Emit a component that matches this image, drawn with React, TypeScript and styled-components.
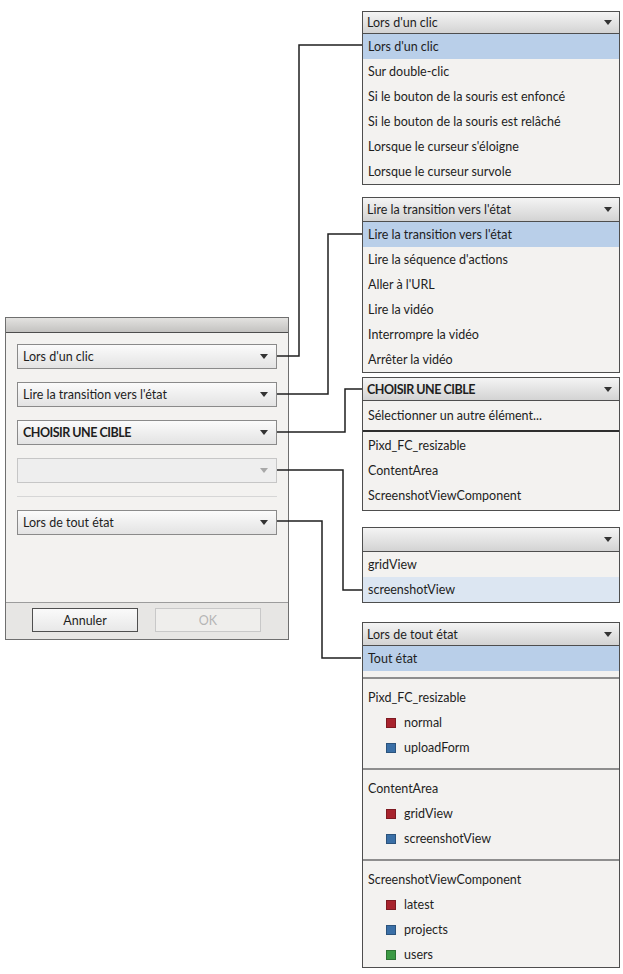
import styled, { createGlobalStyle } from "styled-components";

const GlobalStyle = createGlobalStyle`
  html, body {
    margin: 0;
    padding: 0;
    background: #ffffff;
  }
  body {
    font-family: Lato, "Open Sans", sans-serif;
    font-size: 12.5px;
    color: #1e1e1e;
  }
`;

const Canvas = styled.div`
  position: relative;
  width: 623px;
  height: 974px;
  display: flex;
  align-items: flex-start;
  overflow: hidden;
`;

/* ---------- dialog ---------- */

const Dialog = styled.div`
  box-sizing: border-box;
  margin: 317px 0 0 5px;
  width: 284px;
  height: 323px;
  border: 1px solid #6f6f6f;
  background: #f3f2f0;
  display: flex;
  flex-direction: column;
`;

const TitleBar = styled.div`
  height: 14px;
  background: linear-gradient(#e3e2e0, #c3c2c0);
  border-bottom: 1px solid #4d4d4d;
`;

const DialogBody = styled.div`
  flex: 1;
  padding: 11px 11px 0;
  display: flex;
  flex-direction: column;
  gap: 13px;
`;

const Select = styled.div<{ $disabled?: boolean; $bold?: boolean }>`
  box-sizing: border-box;
  height: 25px;
  display: flex;
  align-items: center;
  justify-content: space-between;
  padding: 0 8px 0 5px;
  border: 1px solid ${(p) => (p.$disabled ? "#c6c6c6" : "#8a8a8a")};
  background: ${(p) =>
    p.$disabled ? "#eeeeee" : "linear-gradient(#fbfbfb, #e3e3e3)"};
  font-weight: ${(p) => (p.$bold ? 700 : 400)};
  letter-spacing: ${(p) => (p.$bold ? "-0.5px" : "0")};
`;

const Arrow = styled.span<{ $disabled?: boolean }>`
  width: 0;
  height: 0;
  border-left: 4px solid transparent;
  border-right: 4px solid transparent;
  border-top: 5px solid ${(p) => (p.$disabled ? "#a8a8a8" : "#333333")};
`;

const Divider = styled.div`
  height: 1px;
  background: #d6d6d6;
`;

const Footer = styled.div`
  height: 37px;
  box-sizing: border-box;
  border-top: 1px solid #9c9c9c;
  background: #e7e6e4;
  display: flex;
  gap: 17px;
  padding: 5px 0 0 26px;
`;

const Button = styled.div<{ $disabled?: boolean }>`
  box-sizing: border-box;
  width: 106px;
  height: 24px;
  display: flex;
  align-items: center;
  justify-content: center;
  border: 1px solid ${(p) => (p.$disabled ? "#c8c8c8" : "#4f4f4f")};
  background: ${(p) =>
    p.$disabled ? "#efeeec" : "linear-gradient(#fafafa, #e8e8e8)"};
  color: ${(p) => (p.$disabled ? "#b5b5b5" : "#1e1e1e")};
`;

/* ---------- open menus ---------- */

const MenuColumn = styled.div`
  margin-left: 73px;
  width: 258px;
  display: flex;
  flex-direction: column;
`;

const Menu = styled.div<{ $top: number }>`
  box-sizing: border-box;
  margin-top: ${(p) => p.$top}px;
  border: 1px solid #4e4e4e;
  background: #f3f2f0;
  display: flex;
  flex-direction: column;
`;

// header height includes its bottom rule
const MenuHeader = styled.div<{ $h?: number; $bold?: boolean }>`
  box-sizing: border-box;
  height: ${(p) => p.$h ?? 22}px;
  display: flex;
  align-items: center;
  justify-content: space-between;
  padding: 0 7px 0 4px;
  background: linear-gradient(#f4f4f4, #d3d3d3);
  border-bottom: 1px solid #4e4e4e;
  font-weight: ${(p) => (p.$bold ? 700 : 400)};
  letter-spacing: ${(p) => (p.$bold ? "-0.5px" : "0")};
`;

const Item = styled.div<{ $hl?: "strong" | "soft"; $h?: number; $indent?: boolean }>`
  height: ${(p) => p.$h ?? 25}px;
  display: flex;
  align-items: center;
  gap: 8px;
  padding-left: ${(p) => (p.$indent ? 23 : 5)}px;
  background: ${(p) =>
    p.$hl === "strong" ? "#b9cfe9" : p.$hl === "soft" ? "#dce6f2" : "transparent"};
`;

const Rule = styled.div<{ $dark?: boolean; $mt?: number; $mb?: number }>`
  margin: ${(p) => p.$mt ?? 0}px 0 ${(p) => p.$mb ?? 0}px;
  border-top: 2px solid ${(p) => (p.$dark ? "#2e2e2e" : "#8e8e8e")};
`;

const Group = styled.div<{ $pb?: number }>`
  padding: 1px 0 ${(p) => p.$pb ?? 0}px;
`;

const Swatch = styled.span<{ $color: string }>`
  box-sizing: border-box;
  width: 10px;
  height: 10px;
  background: ${(p) => p.$color};
  border: 1px solid rgba(0, 0, 0, 0.25);
`;

/* ---------- connectors ---------- */

const Wires = styled.svg`
  position: absolute;
  left: 0;
  top: 0;
  pointer-events: none;
`;

const RED = "#a8232d";
const BLUE = "#3a6fa6";
const GREEN = "#3c9a44";

const wires = [
  "M277 356 H299 V45 H362",
  "M277 394 H328 V234 H362",
  "M277 432 H345 V389 H362",
  "M277 470 H343 V590 H362",
  "M277 521 H322 V658 H361",
];

const stateGroups = [
  { name: "Pixd_FC_resizable", states: [["normal", RED], ["uploadForm", BLUE]] },
  { name: "ContentArea", states: [["gridView", RED], ["screenshotView", BLUE]] },
  {
    name: "ScreenshotViewComponent",
    states: [["latest", RED], ["projects", BLUE], ["users", GREEN]],
  },
];

export default function App() {
  return (
    <>
      <GlobalStyle />
      <Canvas>
        <Dialog>
          <TitleBar />
          <DialogBody>
            <Select>
              Lors d'un clic
              <Arrow />
            </Select>
            <Select>
              Lire la transition vers l'état
              <Arrow />
            </Select>
            <Select $bold>
              CHOISIR UNE CIBLE
              <Arrow />
            </Select>
            <Select $disabled>
              <span />
              <Arrow $disabled />
            </Select>
            <Divider />
            <Select>
              Lors de tout état
              <Arrow />
            </Select>
          </DialogBody>
          <Footer>
            <Button>Annuler</Button>
            <Button $disabled>OK</Button>
          </Footer>
        </Dialog>

        <MenuColumn>
          <Menu $top={11}>
            <MenuHeader>
              Lors d'un clic
              <Arrow />
            </MenuHeader>
            <Item $hl="strong">Lors d'un clic</Item>
            <Item>Sur double-clic</Item>
            <Item>Si le bouton de la souris est enfoncé</Item>
            <Item>Si le bouton de la souris est relâché</Item>
            <Item>Lorsque le curseur s'éloigne</Item>
            <Item>Lorsque le curseur survole</Item>
          </Menu>

          <Menu $top={12}>
            <MenuHeader $h={24}>
              Lire la transition vers l'état
              <Arrow />
            </MenuHeader>
            <Item $hl="strong">Lire la transition vers l'état</Item>
            <Item>Lire la séquence d'actions</Item>
            <Item>Aller à l'URL</Item>
            <Item>Lire la vidéo</Item>
            <Item>Interrompre la vidéo</Item>
            <Item>Arrêter la vidéo</Item>
          </Menu>

          <Menu $top={4}>
            <MenuHeader $h={23} $bold>
              CHOISIR UNE CIBLE
              <Arrow />
            </MenuHeader>
            <Item $h={29}>Sélectionner un autre élément...</Item>
            <Rule $dark />
            <Group $pb={2}>
              <Item>Pixd_FC_resizable</Item>
              <Item>ContentArea</Item>
              <Item>ScreenshotViewComponent</Item>
            </Group>
          </Menu>

          <Menu $top={16}>
            <MenuHeader $h={24}>
              <span />
              <Arrow />
            </MenuHeader>
            <Item>gridView</Item>
            <Item $hl="soft">screenshotView</Item>
          </Menu>

          <Menu $top={19}>
            <MenuHeader $h={23}>
              Lors de tout état
              <Arrow />
            </MenuHeader>
            <Item $hl="strong">Tout état</Item>
            {stateGroups.map((g, i) => (
              <div key={g.name}>
                <Rule $mt={i === 0 ? 6 : 8} $mb={5} />
                <Group>
                  <Item>{g.name}</Item>
                  {g.states.map(([label, color]) => (
                    <Item key={label} $indent>
                      <Swatch $color={color} />
                      {label}
                    </Item>
                  ))}
                </Group>
              </div>
            ))}
          </Menu>
        </MenuColumn>

        <Wires width={623} height={974}>
          {wires.map((d) => (
            <path key={d} d={d} fill="none" stroke="#1f1f1f" strokeWidth={1.5} />
          ))}
        </Wires>
      </Canvas>
    </>
  );
}
